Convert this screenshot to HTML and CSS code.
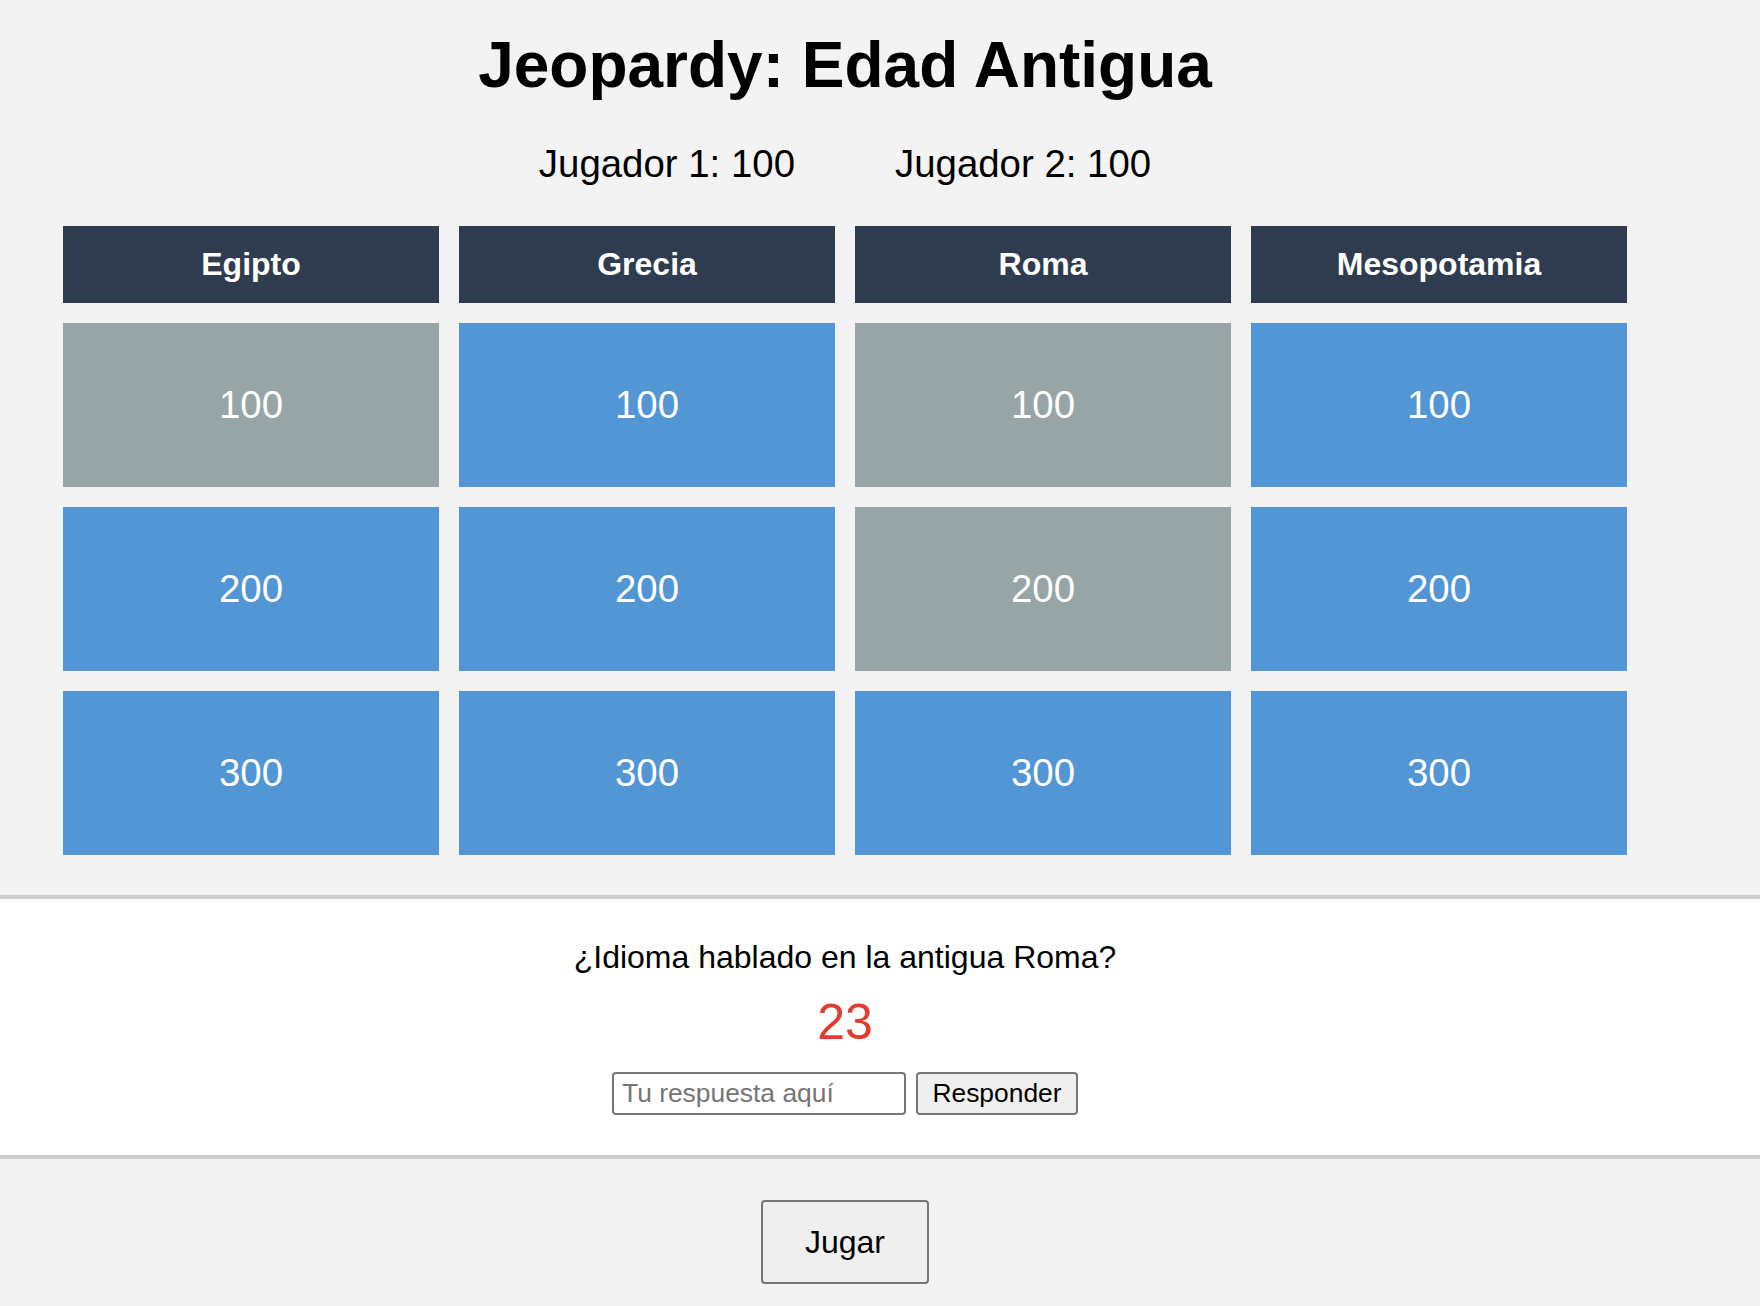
FILE: index.html
```html
<!DOCTYPE html>
<html lang="es">
<head>
<meta charset="utf-8">
<title>Jeopardy: Edad Antigua</title>
<link rel="stylesheet" href="styles.css">
</head>
<body>
  <div class="wrap">
    <h1 class="title">Jeopardy: Edad Antigua</h1>
    <div class="scores">
      <span class="score">Jugador 1: 100</span>
      <span class="score">Jugador 2: 100</span>
    </div>
    <div class="board">
      <div class="cat">Egipto</div>
      <div class="cat">Grecia</div>
      <div class="cat">Roma</div>
      <div class="cat">Mesopotamia</div>

      <div class="cell used">100</div>
      <div class="cell">100</div>
      <div class="cell used">100</div>
      <div class="cell">100</div>

      <div class="cell">200</div>
      <div class="cell">200</div>
      <div class="cell used">200</div>
      <div class="cell">200</div>

      <div class="cell">300</div>
      <div class="cell">300</div>
      <div class="cell">300</div>
      <div class="cell">300</div>
    </div>
  </div>

  <section class="panel">
    <div class="wrap panel-inner">
      <p class="question">¿Idioma hablado en la antigua Roma?</p>
      <div class="timer">23</div>
      <div class="answer-row">
        <input class="answer" type="text" placeholder="Tu respuesta aquí">
        <button class="respond" type="button">Responder</button>
      </div>
    </div>
  </section>

  <div class="wrap play-row">
    <button class="play" type="button">Jugar</button>
  </div>
</body>
</html>
```

FILE: styles.css
```css
html, body {
  margin: 0;
  padding: 0;
}

body {
  background: #f3f3f3;
  font-family: "Liberation Sans", Arial, sans-serif;
  color: #000;
}

.wrap {
  width: 1690px;
  box-sizing: border-box;
}

.title {
  margin: 0;
  padding-top: 28px;
  font-size: 64px;
  font-weight: bold;
  text-align: center;
  line-height: normal;
}

.scores {
  display: flex;
  justify-content: center;
  gap: 100px;
  margin-top: 40px;
  font-size: 38.4px;
}

.board {
  display: grid;
  grid-template-columns: repeat(4, 376px);
  gap: 20px;
  justify-content: center;
  margin-top: 40px;
}

.cat {
  background: #2f3c4f;
  color: #fff;
  font-weight: bold;
  font-size: 32px;
  text-align: center;
  padding: 20px 0;
}

.cell {
  background: #5296d5;
  color: #fff;
  font-size: 38.4px;
  text-align: center;
  padding: 60px 0;
}

.cell.used {
  background: #97a5a6;
}

.panel {
  margin-top: 40px;
  background: #fff;
  border-top: 4px solid #cccccc;
  border-bottom: 4px solid #cccccc;
}

.panel-inner {
  padding: 40px 0;
  text-align: center;
}

.question {
  margin: 0 0 18px;
  font-size: 32px;
}

.timer {
  margin: 0 0 22px;
  font-size: 50px;
  line-height: 56px;
  color: #e33b2e;
}

.answer-row {
  display: flex;
  justify-content: center;
  gap: 10px;
}

.answer {
  box-sizing: border-box;
  width: 294px;
  height: 43px;
  margin: 0;
  padding: 0 8px;
  font-family: "Liberation Sans", Arial, sans-serif;
  font-size: 26.4px;
  border: 2px solid #767676;
  border-radius: 4px;
  background: #fff;
}

.answer::placeholder {
  color: #757575;
}

.respond {
  box-sizing: border-box;
  width: 162px;
  height: 43px;
  margin: 0;
  padding: 0;
  font-family: "Liberation Sans", Arial, sans-serif;
  font-size: 26.4px;
  color: #000;
  background: #efefef;
  border: 2px solid #767676;
  border-radius: 4px;
}

.play-row {
  display: flex;
  justify-content: center;
  padding-top: 41px;
}

.play {
  margin: 0;
  padding: 21.5px 41.5px;
  font-family: "Liberation Sans", Arial, sans-serif;
  font-size: 32px;
  line-height: normal;
  color: #000;
  background: #efefef;
  border: 2px solid #767676;
  border-radius: 4px;
}
```
